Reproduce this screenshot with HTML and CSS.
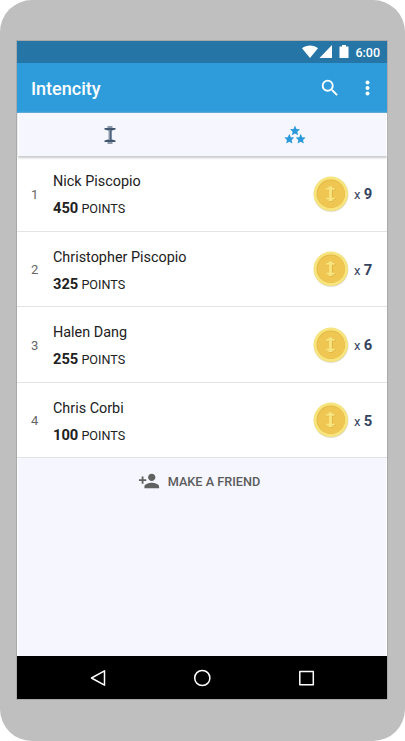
FILE: index.html
```
<!DOCTYPE html>
<html lang="en">
<head>
<meta charset="utf-8">
<title>Intencity</title>
<link rel="stylesheet" href="styles.css">
</head>
<body>
<svg class="defs" width="0" height="0" aria-hidden="true">
  <symbol id="coin" viewBox="0 0 36 36">
    <circle cx="18" cy="18.400" r="17.400" fill="#d9d6c2"/>
    <circle cx="17.800" cy="17.800" r="17.200" fill="#f7e47c"/>
    <circle cx="17.800" cy="17.800" r="14.200" fill="#e3b947"/>
    <circle cx="18.100" cy="18.100" r="13.700" fill="#efc652"/>
    <path transform="translate(.7 .6)" d="M15.500 10.500h4v1.500h2.300v1.700h-2.900v8.100h2.900v1.700h-2.300V25h-4v-1.500h-2.300v-1.700h2.900v-8.100h-2.900V12h2.300z" fill="#d9ac3e"/>
    <path d="M15.500 10.500h4v1.500h2.300v1.700h-2.900v8.100h2.900v1.700h-2.300V25h-4v-1.500h-2.300v-1.700h2.900v-8.100h-2.900V12h2.300z" fill="#f8e57f"/>
  </symbol>
  <symbol id="star" viewBox="0 0 24 24">
    <path d="M12 0l3.500 8.200 8.500.8-6.400 5.800 1.900 8.700-7.500-4.600-7.500 4.600 1.900-8.700L0 9l8.500-.8z"/>
  </symbol>
</svg>
<div class="phone">
  <div class="screen">
    <div class="status">
      <svg width="52" height="14" viewBox="0 0 52 14" fill="#fff">
        <path d="M0 3.200C4.500-.5 11.500-.5 16 3.200L8 13z"/>
        <path d="M30 0v13H17.500z"/>
        <path d="M40 0h4v1.500h2.500V13h-9V1.500H40z"/>
      </svg>
      <span class="time">6:00</span>
    </div>
    <header class="appbar">
      <h1>Intencity</h1>
      <svg class="search" width="22" height="22" viewBox="0 0 24 24" fill="#fff"><path d="M15.500 14h-.79l-.28-.27A6.471 6.471 0 0 0 16 9.500 6.500 6.500 0 1 0 9.500 16c1.610 0 3.090-.59 4.230-1.570l.27.28v.79l5 4.990L20.490 19l-4.990-5zm-6 0C7.010 14 5 11.990 5 9.500S7.010 5 9.500 5 14 7.010 14 9.500 11.990 14 9.500 14z"/></svg>
      <svg class="more" width="6" height="16" viewBox="0 0 6 16" fill="#fff"><circle cx="2.500" cy="2.500" r="2"/><circle cx="2.500" cy="8" r="2"/><circle cx="2.500" cy="13.500" r="2"/></svg>
    </header>
    <nav class="tabs">
      <div class="tab tab-workout">
        <svg width="14" height="20" viewBox="0 0 14 20"><path d="M4.500 1h5v2h-5zM4.500 17h5v2h-5z" fill="#8b98aa"/><path d="M1.500 3h11v1.500L9 5.500H5L1.500 4.500zM1.500 17v-1.500l3.500-1h4l3.500 1V17z" fill="#43566f"/><path d="M5.500 5h3v10h-3z" fill="#8a9aae"/><path d="M7.200 5h1.300v10H7.200z" fill="#40546f"/></svg>
      </div>
      <div class="tab tab-ranking">
        <svg width="22" height="20" viewBox="0 0 22 20" fill="#2c9ada"><use href="#star" x="6" y="0.500" width="10" height="10"/><use href="#star" x="0.300" y="8.800" width="10" height="10"/><use href="#star" x="11.700" y="8.800" width="10" height="10"/></svg>
      </div>
    </nav>
    <main class="list">
      <div class="row">
        <span class="rank">1</span>
        <div class="who"><div class="name">Nick Piscopio</div><div class="points"><b>450</b> POINTS</div></div>
        <svg class="coin" width="36" height="36"><use href="#coin"/></svg>
        <span class="count">x <b>9</b></span>
      </div>
      <div class="row">
        <span class="rank">2</span>
        <div class="who"><div class="name">Christopher Piscopio</div><div class="points"><b>325</b> POINTS</div></div>
        <svg class="coin" width="36" height="36"><use href="#coin"/></svg>
        <span class="count">x <b>7</b></span>
      </div>
      <div class="row">
        <span class="rank">3</span>
        <div class="who"><div class="name">Halen Dang</div><div class="points"><b>255</b> POINTS</div></div>
        <svg class="coin" width="36" height="36"><use href="#coin"/></svg>
        <span class="count">x <b>6</b></span>
      </div>
      <div class="row">
        <span class="rank">4</span>
        <div class="who"><div class="name">Chris Corbi</div><div class="points"><b>100</b> POINTS</div></div>
        <svg class="coin" width="36" height="36"><use href="#coin"/></svg>
        <span class="count">x <b>5</b></span>
      </div>
    </main>
    <div class="friend">
      <svg width="22" height="22" viewBox="0 0 24 24" fill="#616161"><path d="M15 12c2.210 0 4-1.790 4-4s-1.790-4-4-4-4 1.790-4 4 1.790 4 4 4zm-9-2V7H4v3H1v2h3v3h2v-3h3v-2H6zm9 4c-2.670 0-8 1.340-8 4v2h16v-2c0-2.660-5.330-4-8-4z"/></svg>
      <span>MAKE A FRIEND</span>
    </div>
    <footer class="navbar">
      <svg width="18" height="18" viewBox="0 0 18 18"><path d="M15.500 1.800v14.400L2.500 9z"/></svg>
      <svg width="18" height="18" viewBox="0 0 18 18"><circle cx="9.300" cy="9" r="7.600"/></svg>
      <svg width="18" height="18" viewBox="0 0 18 18"><path d="M2.800 2.500h13.500v13.300H2.800z"/></svg>
    </footer>
  </div>
</div>
</body>
</html>
```
FILE: styles.css
```
* { box-sizing: border-box; }
body { margin: 0; background: #fff; font-family: Roboto, "Liberation Sans", sans-serif; }
svg { display: block; flex: none; }
.defs { position: absolute; }
.phone {
  width: 405px;
  height: 741px;
  padding: 41px 18px 42px 17px;
  background: #bfbfbf;
  border-radius: 32px;
}
.screen {
  width: 370px;
  height: 658px;
  display: flex;
  flex-direction: column;
  background: #f5f6fe;
  box-shadow: 0 0 0 1px #a9a9a9;
}
.status {
  height: 22px;
  flex: none;
  display: flex;
  align-items: center;
  justify-content: flex-end;
  padding-right: 7px;
  background: #2576a6;
}
.status svg { margin-right: 1px; }
.time { color: #fff; font-size: 12.500px; font-weight: 500; line-height: 22px; padding-top: 1px; }
.appbar {
  height: 50px;
  flex: none;
  display: flex;
  align-items: center;
  padding: 0 16px 0 14px;
  background: #2e9cdb;
  color: #fff;
}
.appbar h1 { flex: 1; margin: 0; padding-top: 1px; font-size: 18px; font-weight: 500; line-height: 24px; }
.search { margin-right: 24px; }
.tabs {
  position: relative;
  height: 43px;
  flex: none;
  display: flex;
  margin: 0 1px 0 2px;
  background: #f5f6fe;
  box-shadow: -1px 0 #fff, 1px 0 #fff, 0 1px 2px 1px #cacaca;
}
.tab { flex: 1; display: flex; align-items: center; justify-content: center; }
.tab-workout { padding-right: 3px; }
.tab-ranking { padding-left: 1px; }
.list { flex: none; background: #fff; }
.row {
  height: 75.500px;
  display: flex;
  align-items: center;
  padding: 1px 14px 0;
  border-bottom: 1.500px solid #e4e4e4;
}
.rank { width: 22px; padding-top: 1px; font-size: 13px; color: #666; }
.who { flex: 1; padding-top: 3px; color: #212121; }
.name { font-size: 14.400px; line-height: 27px; }
.points { font-size: 12.600px; line-height: 27px; }
.points b { font-size: 14.700px; }
.coin { margin-right: 5px; }
.count { width: 19px; padding-top: 1px; color: #34435e; font-size: 13px; white-space: nowrap; }
.count b { font-size: 14.800px; }
.friend {
  flex: 1;
  display: flex;
  align-items: flex-start;
  justify-content: center;
  padding: 12px 6px 0 0;
  gap: 8px;
  color: #5c5c5c;
  font-size: 12.700px;
  font-weight: 500;
  line-height: 24px;
  box-shadow: inset 1px 0 #fff, inset -1px 0 #fff;
}
.navbar {
  height: 43px;
  flex: none;
  display: flex;
  align-items: center;
  justify-content: space-between;
  padding: 0 72px;
  background: #000;
}
.navbar svg { fill: none; stroke: #fff; stroke-width: 1.500; stroke-linejoin: round; }
```
